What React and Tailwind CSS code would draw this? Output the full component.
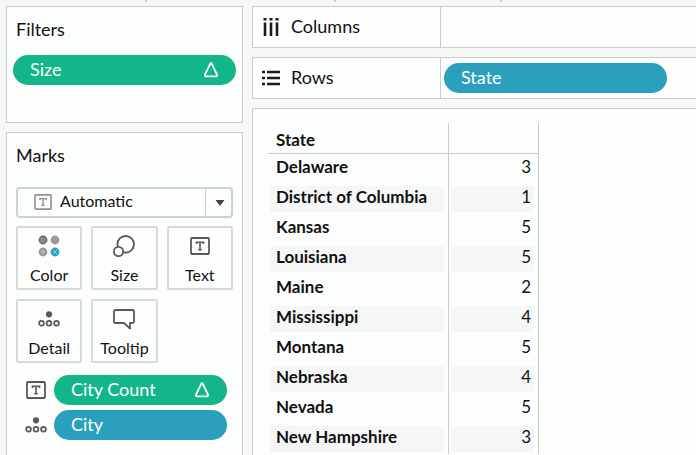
const rows = [
  ["Delaware", 3],
  ["District of Columbia", 1],
  ["Kansas", 5],
  ["Louisiana", 5],
  ["Maine", 2],
  ["Mississippi", 4],
  ["Montana", 5],
  ["Nebraska", 4],
  ["Nevada", 5],
  ["New Hampshire", 3],
];

function TextIcon({ className }) {
  return (
    <svg width="20" height="18" viewBox="0 0 20 18" fill="none" stroke="currentColor" className={className} aria-hidden="true">
      <rect x="1" y="1" width="18" height="16" rx="1" strokeWidth="1.8" />
      <path d="M6.5 7V5.2h7V7M10 5.2v7.6M8.2 12.8h3.6" strokeWidth="1.6" />
    </svg>
  );
}

function ColorIcon() {
  return (
    <svg width="22" height="22" viewBox="0 0 22 22" aria-hidden="true">
      <circle cx="5" cy="5" r="3.7" fill="#8f8888" stroke="#6b6666" strokeWidth="1.4" />
      <circle cx="17" cy="5" r="4.4" fill="#a09898" />
      <circle cx="5" cy="17" r="4.4" fill="#a09898" />
      <path d="M3 16h4M5 16v3" stroke="#d3cfcf" strokeWidth="1" />
      <circle cx="17" cy="17" r="4.4" fill="#2ba0bd" />
      <path d="M15 15l4 4M19 15l-4 4" stroke="#8fd0df" strokeWidth="1" />
    </svg>
  );
}

function SizeIcon() {
  return (
    <svg width="22" height="22" viewBox="0 0 22 22" stroke="#5c5757" strokeWidth="1.8" aria-hidden="true">
      <circle cx="12.7" cy="9.3" r="8.3" fill="none" />
      <circle cx="5.5" cy="16.5" r="4.6" fill="#fcfefe" />
    </svg>
  );
}

function DetailIcon() {
  return (
    <svg width="22" height="16" viewBox="0 0 22 16" aria-hidden="true">
      <circle cx="11" cy="3.3" r="3.1" fill="#5c5757" />
      <g fill="none" stroke="#5c5757" strokeWidth="1.7">
        <circle cx="3.5" cy="12.3" r="2.4" />
        <circle cx="11" cy="12.3" r="2.4" />
        <circle cx="18.5" cy="12.3" r="2.4" />
      </g>
    </svg>
  );
}

function TooltipIcon() {
  return (
    <svg width="22" height="21" viewBox="0 0 22 21" fill="none" stroke="#5c5757" strokeWidth="1.8" strokeLinejoin="round" aria-hidden="true">
      <path d="M2.5 1h17Q21 1 21 2.5v10Q21 14 19.5 14H17v5.5L11 14H2.5Q1 14 1 12.5v-10Q1 1 2.5 1z" />
    </svg>
  );
}

function ColumnsIcon() {
  return (
    <svg width="18" height="20" viewBox="0 0 18 20" fill="#1c1c1c" aria-hidden="true">
      <path d="M1.5 1h3v2.6h-3zM7.5 1h3v2.6h-3zM13.5 1h3v2.6h-3zM1.7 5.5h2.6V19H1.7zM7.7 5.5h2.6V19H7.7zM13.7 5.5h2.6V19h-2.6z" />
    </svg>
  );
}

function RowsIcon() {
  return (
    <svg width="18" height="16" viewBox="0 0 18 16" fill="#1c1c1c" aria-hidden="true">
      <path d="M0 .7h3v2.6H0zM0 6.7h3v2.6H0zM0 12.7h3v2.6H0zM5 .8h13v2.4H5zM5 6.8h13v2.4H5zM5 12.8h13v2.4H5z" />
    </svg>
  );
}

function DeltaIcon() {
  return (
    <svg width="14" height="16" viewBox="0 0 14 16" fill="none" stroke="white" strokeWidth="1.8" strokeLinejoin="round" aria-label="Table calculation">
      <path d="M6.2 1.8Q7 .6 7.8 1.8L13 12.6Q13.2 14.4 12 14.4H2Q.8 14.4 1 12.6z" />
    </svg>
  );
}

function Pill({ label, green, delta }) {
  return (
    <button
      type="button"
      className={`flex h-[30px] w-full items-center justify-between rounded-full pr-[18px] pl-[17px] text-lg leading-none text-white ${green ? "bg-[#12b688]" : "bg-[#2ba0bd]"}`}
    >
      <span className="pb-[2px]">{label}</span>
      {delta && <DeltaIcon />}
    </button>
  );
}

function MarkButton({ label, children }) {
  return (
    <button type="button" className="flex h-[64px] flex-col items-center justify-between rounded-xs border-2 border-[#d6dad9] pb-[3px] text-base leading-5 text-[#111111]">
      <span className="flex h-8 items-end">
        <span className="flex h-7 items-center">{children}</span>
      </span>
      {label}
    </button>
  );
}

function Shelf({ label, icon, children }) {
  return (
    <section className="flex h-[42px] border border-r-0 border-[#c8cccb] bg-[#fcfefe]">
      <h2 className="flex w-[188px] shrink-0 items-center gap-[11px] border-r border-[#c8cccb] pl-[9px] text-lg leading-none">
        {icon}
        <span className="pb-[3px]">{label}</span>
      </h2>
      <div className="flex flex-1 items-center pl-[3px]">{children}</div>
    </section>
  );
}

export default function App() {
  return (
    <div className="relative flex min-h-screen gap-[9px] bg-[#f6f8f7] pt-[6px] pl-[6px] font-['Lato',sans-serif] text-[#111111]">
      <div className="absolute top-0 left-[145px] h-[2px] w-[2px] bg-[#ccd0cf]" />
      <div className="absolute top-0 left-[334px] h-[2px] w-[2px] bg-[#ccd0cf]" />
      <div className="absolute top-0 left-[500px] h-[2px] w-[2px] bg-[#ccd0cf]" />

      <aside className="flex w-[237px] shrink-0 flex-col gap-[9px]">
        <section className="h-[117px] border border-[#c8cccb] bg-[#fcfefe] px-[6px] pt-[10px]">
          <h2 className="px-[3px] text-lg leading-6">Filters</h2>
          <div className="pt-[14px]">
            <Pill label="Size" green delta />
          </div>
        </section>

        <section className="flex-1 border border-b-0 border-[#c8cccb] bg-[#fcfefe] px-[9px] pt-[10px]">
          <h2 className="text-lg leading-6">Marks</h2>
          <div className="relative mt-5">
            <select
              aria-label="Mark type"
              className="block h-[31px] w-full appearance-none rounded-sm border-2 border-[#ccd3d1] bg-[#fcfefe] pb-[3px] pl-[42px] text-base leading-none"
            >
              <option>Automatic</option>
            </select>
            <TextIcon className="pointer-events-none absolute top-[7px] left-[18px] h-4 w-[18px] text-[#958c8c]" />
            <div className="pointer-events-none absolute inset-y-[2px] right-0 flex w-7 items-center justify-center border-l border-[#ccd0cf]">
              <svg width="10" height="6" viewBox="0 0 10 6" fill="#444141" aria-hidden="true">
                <path d="M.5 0h9L5 6z" />
              </svg>
            </div>
          </div>
          <div className="mt-2 grid grid-cols-3 gap-[9px]">
            <MarkButton label="Color"><ColorIcon /></MarkButton>
            <MarkButton label="Size"><SizeIcon /></MarkButton>
            <MarkButton label="Text"><TextIcon className="text-[#5c5757]" /></MarkButton>
            <MarkButton label="Detail"><DetailIcon /></MarkButton>
            <MarkButton label="Tooltip"><TooltipIcon /></MarkButton>
          </div>
          <div className="mt-3 flex flex-col gap-[5px] pr-[6px] pl-[9px]">
            <div className="flex items-center gap-[7px]">
              <span className="flex w-[22px] justify-center"><TextIcon className="text-[#5c5757]" /></span>
              <div className="flex-1"><Pill label="City Count" green delta /></div>
            </div>
            <div className="flex items-center gap-[7px]">
              <span className="flex w-[22px] justify-center"><DetailIcon /></span>
              <div className="flex-1"><Pill label="City" /></div>
            </div>
          </div>
        </section>
      </aside>

      <main className="flex min-w-0 flex-1 flex-col gap-[9px]">
        <Shelf label="Columns" icon={<ColumnsIcon />} />
        <Shelf label="Rows" icon={<RowsIcon />}>
          <div className="w-[223px]">
            <Pill label="State" />
          </div>
        </Shelf>
        <section className="flex flex-1 border border-r-0 border-b-0 border-[#c8cccb] bg-[#fcfefe] pt-[14px] pl-[15px]">
          <table className="w-[271px] table-fixed border-separate border-spacing-0 self-start text-[17px] leading-5">
            <thead>
              <tr className="h-[31px]">
                <th scope="col" className="w-[181px] border-r border-b border-[#c8cccb] pt-1 pl-2 text-left font-bold">State</th>
                <td className="border-r border-b border-[#c8cccb]" />
              </tr>
            </thead>
            <tbody>
              {rows.map(([state, count]) => (
                <tr key={state} className="group h-[30px]">
                  <th scope="row" className="border-r border-[#c8cccb] p-0 pr-1 pl-[2px] text-left font-bold">
                    <div className="h-[26px] pl-[6px] leading-[22px] whitespace-nowrap group-even:bg-[#f5f7f6]">{state}</div>
                  </th>
                  <td className="border-r border-[#c8cccb] p-0 pr-1 pl-[3px] text-right">
                    <div className="h-[26px] pr-[3px] leading-[22px] group-even:bg-[#f5f7f6]">{count}</div>
                  </td>
                </tr>
              ))}
            </tbody>
          </table>
        </section>
      </main>
    </div>
  );
}
